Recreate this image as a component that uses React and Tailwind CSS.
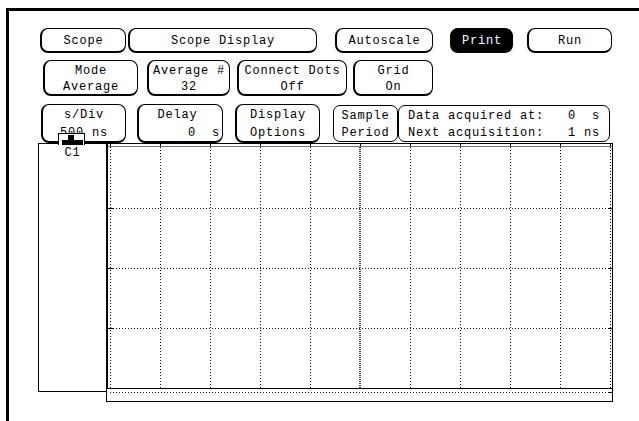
function Key({ className = '', dark = false, children }) {
  return (
    <div
      className={`flex flex-col items-center justify-center rounded-[8px] border-t border-r border-b-2 border-l-2 border-black pt-[2px] leading-[16px] ${
        dark ? 'bg-black text-white' : 'bg-white text-black'
      } ${className}`}
    >
      {children}
    </div>
  );
}

function Graticule() {
  const cols = [0, 1, 2, 3, 4, 5, 6, 7, 8, 9, 10].map((k) => 4 + k * 50);
  const rows = [66, 126, 186];
  return (
    <svg width="507" height="260" className="block">
      {cols.map((x) =>
        x === 254 ? (
          <line key={x} x1={x} y1="5" x2={x} y2="246" stroke="#444" strokeWidth="2" strokeDasharray="1 1" />
        ) : (
          <line key={x} x1={x + 0.5} y1="5" x2={x + 0.5} y2="246" stroke="#111" strokeWidth="1" strokeDasharray="1 2" />
        )
      )}
      {cols.map((x) => (
        <line key={'t' + x} x1={x + 0.5} y1="1" x2={x + 0.5} y2="6" stroke="#000" strokeWidth="1" />
      ))}
      {rows.map((y) => (
        <g key={y}>
          <line x1="4" y1={y + 0.5} x2="504" y2={y + 0.5} stroke="#111" strokeWidth="1" strokeDasharray="1 2" />
          <line x1="2" y1={y + 0.5} x2="7" y2={y + 0.5} stroke="#000" strokeWidth="1" />
          <line x1="502" y1={y + 0.5} x2="507" y2={y + 0.5} stroke="#000" strokeWidth="1" />
        </g>
      ))}
      <line x1="0" y1="1.5" x2="507" y2="1.5" stroke="#000" strokeWidth="1" />
      <line x1="0" y1="4.5" x2="507" y2="4.5" stroke="#777" strokeWidth="1" />
      <rect x="0" y="1" width="2" height="246" fill="#000" />
      <line x1="0.5" y1="246" x2="0.5" y2="260" stroke="#000" strokeWidth="1" />
      <line x1="506.5" y1="1" x2="506.5" y2="260" stroke="#000" strokeWidth="1" />
      <line x1="0" y1="246.5" x2="507" y2="246.5" stroke="#000" strokeWidth="1" />
      <line x1="4" y1="250.5" x2="504" y2="250.5" stroke="#111" strokeWidth="1" strokeDasharray="1 2" />
      <line x1="502" y1="250.5" x2="507" y2="250.5" stroke="#000" strokeWidth="1" />
      <line x1="0" y1="259.5" x2="507" y2="259.5" stroke="#000" strokeWidth="1" />
    </svg>
  );
}

export default function App() {
  return (
    <div
      className="h-[421px] w-[639px] overflow-hidden bg-white pl-[6px] pt-[8px] text-[12px] tracking-[0.8px] text-black"
      style={{ fontFamily: '"Liberation Mono", "DejaVu Sans Mono", monospace' }}
    >
      <div className="h-full border-t-[3px] border-l-[3px] border-black">
        <div className="mt-[17px] flex h-[25px]">
          <Key className="ml-[31px] w-[86px]">Scope</Key>
          <Key className="ml-[2px] w-[189px]">Scope Display</Key>
          <Key className="ml-[18px] w-[98px]">Autoscale</Key>
          <Key className="ml-[17px] w-[63px]" dark>Print</Key>
          <Key className="ml-[14px] w-[85px]">Run</Key>
        </div>

        <div className="mt-[7px] flex h-[36px]">
          <Key className="ml-[34px] w-[95px]">
            <span>Mode</span>
            <span>Average</span>
          </Key>
          <Key className="ml-[9px] w-[83px]">
            <span>Average #</span>
            <span>32</span>
          </Key>
          <Key className="ml-[7px] w-[110px]">
            <span>Connect Dots</span>
            <span>Off</span>
          </Key>
          <Key className="ml-[6px] w-[80px]">
            <span>Grid</span>
            <span>On</span>
          </Key>
        </div>

        <div className="mt-[8px] flex h-[39px] leading-[18px]">
          <Key className="ml-[32px] w-[85px] leading-[18px]">
            <span>s/Div</span>
            <span>500 ns</span>
          </Key>
          <Key className="ml-[11px] w-[86px] leading-[18px]">
            <span className="pr-[6px]">Delay</span>
            <span className="self-end whitespace-pre pr-[2px]">0  s</span>
          </Key>
          <Key className="ml-[12px] w-[85px] leading-[18px]">
            <span>Display</span>
            <span>Options</span>
          </Key>
          <div className="ml-[13px] mt-[1px] flex h-[37px] w-[65px] flex-col items-center justify-center rounded-[7px] border border-black pt-[2px] leading-[17px]">
            <span>Sample</span>
            <span>Period</span>
          </div>
          <div className="mt-[1px] flex h-[37px] w-[212px] flex-col justify-center rounded-[7px] border border-black px-[9px] pt-[2px] leading-[17px]">
            <div className="flex justify-between">
              <span>Data acquired at:</span>
              <span className="whitespace-pre">0  s</span>
            </div>
            <div className="flex justify-between">
              <span>Next acquisition:</span>
              <span className="whitespace-pre">1 ns</span>
            </div>
          </div>
        </div>

        <div className="relative flex items-start">
          <div className="ml-[29px] flex h-[249px] w-[68px] flex-col items-center border border-r-0 border-black leading-[14px]">
            <span className="mt-[2px]">C1</span>
          </div>
          <div className="-mt-[1px]">
            <Graticule />
          </div>
          <div className="absolute left-[49px] top-[-10px] h-[12px] w-[27px] border border-b-0 border-black bg-white">
            <svg width="25" height="11" className="block">
              <rect x="9" y="1" width="6" height="6" fill="#000" />
              <rect x="3" y="6" width="21" height="5" fill="#000" />
            </svg>
          </div>
        </div>
      </div>
    </div>
  );
}
